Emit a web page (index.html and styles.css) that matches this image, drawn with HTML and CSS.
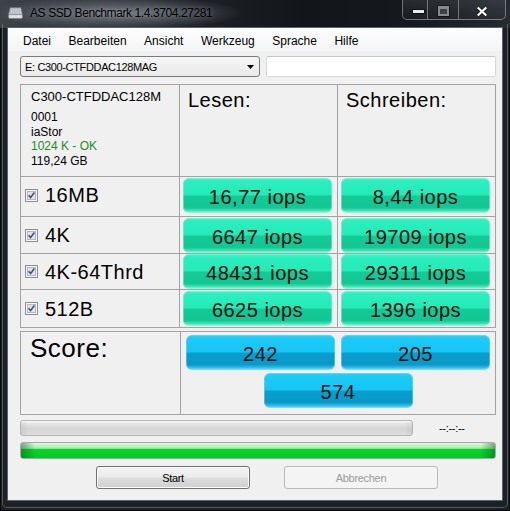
FILE: index.html
```html
<!DOCTYPE html>
<html lang="de">
<head>
<meta charset="utf-8">
<title>AS SSD Benchmark</title>
<link rel="stylesheet" href="styles.css">
</head>
<body>
<div class="window">
  <div class="titlebar">
    <svg class="app-icon" width="15" height="12" viewBox="0 0 15 12">
      <path d="M2.2 0.8 H12.8 L14.4 7.6 H0.6 Z" fill="#b4b9be" stroke="#80868c" stroke-width="0.6"/>
      <path d="M4 1.5 L3.2 7 M6 1.5 L5.6 7 M8 1.5 L8 7 M10 1.5 L10.4 7 M12 1.5 L12.8 7" stroke="#d7dadd" stroke-width="0.7"/>
      <rect x="0.6" y="7.6" width="13.8" height="3.8" rx="0.8" fill="#dfe2e5" stroke="#7b8086" stroke-width="0.6"/>
    </svg>
    <span class="title">AS SSD Benchmark 1.4.3704.27281</span>
    <div class="caption-buttons">
      <div class="cb cb-min"><span class="min-glyph"></span></div>
      <div class="cb cb-max"><span class="max-glyph"></span></div>
      <div class="cb cb-close">
        <svg width="10" height="9" viewBox="0 0 10 9">
          <path d="M1.5 1.2 L8.5 7.8 M8.5 1.2 L1.5 7.8" stroke="rgba(0,0,0,0.55)" stroke-width="3.6" stroke-linecap="square"/>
          <path d="M1.5 1.2 L8.5 7.8 M8.5 1.2 L1.5 7.8" stroke="#ffffff" stroke-width="2.2" stroke-linecap="square"/>
        </svg>
      </div>
    </div>
  </div>
  <div class="frame-body">
    <div class="client">
      <div class="menubar">
        <span class="menu-item">Datei</span>
        <span class="menu-item">Bearbeiten</span>
        <span class="menu-item">Ansicht</span>
        <span class="menu-item">Werkzeug</span>
        <span class="menu-item">Sprache</span>
        <span class="menu-item">Hilfe</span>
      </div>
      <div class="content">
        <div class="selector-row">
          <div class="combo">
            <span class="combo-text">E: C300-CTFDDAC128MAG</span>
            <svg class="combo-arrow" width="7" height="4" viewBox="0 0 7 4"><path d="M0 0 H7 L3.5 4 Z" fill="#000"/></svg>
          </div>
          <div class="textbox"></div>
        </div>

        <div class="results">
          <div class="cell info">
            <div class="model">C300-CTFDDAC128M</div>
            <div class="info-line">0001</div>
            <div class="info-line">iaStor</div>
            <div class="info-line ok">1024 K - OK</div>
            <div class="info-line">119,24 GB</div>
          </div>
          <div class="cell head">Lesen:</div>
          <div class="cell head">Schreiben:</div>

          <div class="cell label first"><svg class="check" width="13" height="13" viewBox="0 0 13 13"><rect x="0.5" y="0.5" width="12" height="12" fill="#f5f5f5" stroke="#8e8f8f"/><rect x="2.5" y="2.5" width="8" height="8" fill="#dfe3ea" stroke="#b3b8c2"/><path d="M3.6 6.3 L5.6 8.6 L9.4 3.6" fill="none" stroke="#3d4f93" stroke-width="1.6"/></svg><span>16MB</span></div>
          <div class="cell barcell first"><div class="bar green">16,77 iops</div></div>
          <div class="cell barcell first"><div class="bar green">8,44 iops</div></div>

          <div class="cell label"><svg class="check" width="13" height="13" viewBox="0 0 13 13"><rect x="0.5" y="0.5" width="12" height="12" fill="#f5f5f5" stroke="#8e8f8f"/><rect x="2.5" y="2.5" width="8" height="8" fill="#dfe3ea" stroke="#b3b8c2"/><path d="M3.6 6.3 L5.6 8.6 L9.4 3.6" fill="none" stroke="#3d4f93" stroke-width="1.6"/></svg><span>4K</span></div>
          <div class="cell barcell"><div class="bar green">6647 iops</div></div>
          <div class="cell barcell"><div class="bar green">19709 iops</div></div>

          <div class="cell label"><svg class="check" width="13" height="13" viewBox="0 0 13 13"><rect x="0.5" y="0.5" width="12" height="12" fill="#f5f5f5" stroke="#8e8f8f"/><rect x="2.5" y="2.5" width="8" height="8" fill="#dfe3ea" stroke="#b3b8c2"/><path d="M3.6 6.3 L5.6 8.6 L9.4 3.6" fill="none" stroke="#3d4f93" stroke-width="1.6"/></svg><span>4K-64Thrd</span></div>
          <div class="cell barcell"><div class="bar green">48431 iops</div></div>
          <div class="cell barcell"><div class="bar green">29311 iops</div></div>

          <div class="cell label"><svg class="check" width="13" height="13" viewBox="0 0 13 13"><rect x="0.5" y="0.5" width="12" height="12" fill="#f5f5f5" stroke="#8e8f8f"/><rect x="2.5" y="2.5" width="8" height="8" fill="#dfe3ea" stroke="#b3b8c2"/><path d="M3.6 6.3 L5.6 8.6 L9.4 3.6" fill="none" stroke="#3d4f93" stroke-width="1.6"/></svg><span>512B</span></div>
          <div class="cell barcell"><div class="bar green">6625 iops</div></div>
          <div class="cell barcell"><div class="bar green">1396 iops</div></div>
        </div>

        <div class="score">
          <div class="cell score-label">Score:</div>
          <div class="cell score-bars">
            <div class="bar blue">242</div>
            <div class="bar blue">205</div>
            <div class="bar blue">574</div>
          </div>
        </div>

        <div class="progress-row">
          <div class="progress"></div>
          <span class="time">--:--:--</span>
        </div>

        <div class="green-progress"></div>

        <div class="buttons">
          <button class="btn">Start</button>
          <button class="btn disabled">Abbrechen</button>
        </div>
      </div>
    </div>
  </div>
</div>
</body>
</html>
```
FILE: styles.css
```css
* { box-sizing: border-box; }

html, body {
  margin: 0;
  padding: 0;
  background: #000;
}

body {
  width: 510px;
  height: 511px;
  overflow: hidden;
  font-family: "Liberation Sans", Arial, sans-serif;
}

.window {
  position: relative;
  width: 510px;
  height: 511px;
  background: #1d2126;
  box-shadow: inset 0 0 0 1px #07090b;
  display: flex;
  flex-direction: column;
}

.window::after {
  content: "";
  position: absolute;
  left: 2px;
  right: 2px;
  top: 24px;
  bottom: 3px;
  border: 1px solid rgba(130, 137, 145, 0.55);
  border-top: none;
  border-radius: 0 0 5px 5px;
  pointer-events: none;
}

/* ---------- title bar ---------- */
.titlebar {
  height: 28px;
  flex: none;
  display: flex;
  align-items: flex-start;
  padding-left: 8px;
  background:
    radial-gradient(ellipse 125px 17px at 118px 13px, rgba(120, 126, 133, 0.95), rgba(120, 126, 133, 0) 100%),
    linear-gradient(to right, #3e434a 0%, #22262c 30%, #121519 60%, #15191e 80%, #262b31 100%);
}

.app-icon {
  flex: none;
  margin-top: 7px;
}

.title {
  margin-left: 7px;
  margin-top: 6px;
  font-size: 12px;
  line-height: 15px;
  letter-spacing: -0.4px;
  color: #000;
  text-shadow: 0 0 5px rgba(255, 255, 255, 0.35);
  white-space: nowrap;
}

.caption-buttons {
  margin-left: auto;
  margin-right: 4px;
  width: 104px;
  height: 20px;
  display: flex;
  border: 1px solid rgba(190, 196, 202, 0.5);
  border-top: none;
  border-radius: 0 0 5px 5px;
  background: linear-gradient(rgba(255, 255, 255, 0.08), rgba(255, 255, 255, 0.02));
  overflow: hidden;
}

.cb {
  height: 19px;
  display: flex;
  align-items: center;
  justify-content: center;
  padding-top: 3px;
}

.cb-min {
  width: 24px;
  justify-content: flex-end;
  padding-right: 3px;
}

.cb-max {
  width: 31px;
  border-left: 1px solid rgba(190, 196, 202, 0.5);
}

.cb-close {
  width: 47px;
  border-left: 1px solid rgba(190, 196, 202, 0.5);
}

.min-glyph {
  width: 11px;
  height: 3px;
  background: #ececec;
  box-shadow: 0 0 0 1px rgba(0, 0, 0, 0.5);
}

.max-glyph {
  width: 11px;
  height: 10px;
  border: 2px solid #858b91;
  border-top-width: 3px;
  background: #3c4147;
  box-shadow: 0 0 0 1px rgba(0, 0, 0, 0.4);
}

/* ---------- client ---------- */
.frame-body {
  flex: 1;
  padding: 0 8px 11px 8px;
}

.client {
  width: 494px;
  height: 472px;
  background: #f0f0f0;
  box-shadow: 0 0 0 1px #59616a;
  display: flex;
  flex-direction: column;
}

.menubar {
  height: 23px;
  flex: none;
  display: flex;
  align-items: center;
  gap: 17.5px;
  padding: 2px 0 0 15px;
  background: linear-gradient(#fdfdfe, #f3f4f6);
  font-size: 12px;
  color: #000;
}

.content {
  padding: 5px 6px 0 12px;
}

.selector-row {
  display: flex;
  gap: 6px;
  height: 21px;
}

.combo {
  width: 240px;
  height: 21px;
  border: 1px solid #7a7a7a;
  border-radius: 3px;
  background: linear-gradient(#f6f6f6, #e9e9e9);
  display: flex;
  align-items: center;
  padding: 0 5px 0 4px;
  font-size: 11px;
  letter-spacing: -0.35px;
  color: #000;
}

.combo-text {
  flex: 1;
  white-space: nowrap;
}

.textbox {
  width: 230px;
  height: 21px;
  background: #fff;
  border: 1px solid #d5d8dc;
  border-top-color: #c4c7cc;
  border-radius: 2px;
}

/* ---------- results table ---------- */
.results {
  margin-top: 7px;
  width: 476px;
  display: grid;
  grid-template-columns: 158px 157px 157px;
  grid-template-rows: 91px 39px 36px 35px 37px;
  gap: 1px;
  padding: 1px;
  background: #a3a3a3;
}

.cell {
  background: #f0f0f0;
}

.info {
  padding: 4px 0 0 10px;
  color: #000;
}

.model {
  font-size: 13px;
  line-height: 16px;
  margin-bottom: 5px;
}

.info-line {
  font-size: 12px;
  line-height: 14.6px;
}

.info-line.ok {
  color: #1f8a1f;
}

.head {
  padding: 3px 0 0 8px;
  font-size: 20px;
  line-height: 24px;
  letter-spacing: 0.5px;
  color: #000;
}

.label {
  display: flex;
  align-items: center;
  padding-left: 4px;
  font-size: 20px;
  line-height: 1;
  letter-spacing: 0.5px;
  color: #000;
}

.label .check {
  flex: none;
  margin-right: 7px;
}

.barcell {
  display: flex;
  align-items: center;
  padding-left: 3px;
}

.first {
  padding-bottom: 3px;
}

.bar {
  width: 149px;
  height: 35px;
  flex: none;
  border-radius: 6px;
  display: flex;
  align-items: center;
  justify-content: center;
  padding: 3px 0 0 0;
  font-size: 20px;
  line-height: 1;
  letter-spacing: 0.5px;
  color: #0d0d0d;
}

.bar.green {
  background: linear-gradient(#3df5c9 0%, #2cefbf 10%, #25e9b7 49%, #14ca97 51%, #12c794 84%, #3bdfad 92%, #97f8dc 100%);
  box-shadow: inset 0 0 0 1px rgba(150, 255, 225, 0.45);
}

.bar.blue {
  background: linear-gradient(#2ad3fb 0%, #1bcaf7 10%, #17c5f4 49%, #0a9ecd 51%, #0999c8 84%, #2bb6e5 92%, #7ddcff 100%);
  box-shadow: inset 0 0 0 1px rgba(140, 225, 255, 0.45);
  padding-top: 2px;
}

/* ---------- score table ---------- */
.score {
  margin-top: 3px;
  width: 476px;
  display: grid;
  grid-template-columns: 159px 314px;
  grid-template-rows: 82px;
  gap: 1px;
  padding: 1px;
  background: #a3a3a3;
}

.score-label {
  padding: 1px 0 0 9px;
  font-size: 26px;
  line-height: 30px;
  letter-spacing: 0.5px;
  color: #000;
}

.score-bars {
  display: flex;
  flex-wrap: wrap;
  justify-content: center;
  align-content: flex-start;
  gap: 3px 6px;
  padding-top: 3px;
}

/* ---------- progress ---------- */
.progress-row {
  margin-top: 5px;
  display: flex;
  align-items: center;
  height: 16px;
}

.progress {
  width: 393px;
  height: 16px;
  border: 1px solid #b4b4b4;
  border-radius: 3px;
  background:
    linear-gradient(to right, rgba(0, 0, 0, 0.06), rgba(0, 0, 0, 0) 2%, rgba(0, 0, 0, 0) 98%, rgba(0, 0, 0, 0.06)),
    linear-gradient(#f0f0f0 0%, #e3e3e3 25%, #d7d7d7 55%, #d9d9d9 85%, #e2e2e2 100%);
  box-shadow: inset 0 1px 0 #f8f8f8;
}

.time {
  margin-left: 26px;
  font-size: 11px;
  letter-spacing: -0.3px;
  color: #000;
}

.green-progress {
  margin-top: 6px;
  width: 476px;
  height: 17px;
  border: 1px solid #a9aba9;
  border-radius: 3px;
  background:
    linear-gradient(to right, rgba(0, 80, 20, 0.45), rgba(0, 80, 20, 0) 3%, rgba(0, 80, 20, 0) 97%, rgba(0, 80, 20, 0.45)),
    linear-gradient(#e2f8e2 0%, #bff2bf 20%, #a4eaa6 36%, #08d52b 40%, #02d025 75%, #03c424 100%);
}

/* ---------- buttons ---------- */
.buttons {
  margin-top: 7px;
  display: flex;
  gap: 34px;
  padding-left: 76px;
}

.btn {
  width: 154px;
  height: 23px;
  padding: 0;
  border: 1px solid #707070;
  border-radius: 3px;
  background: linear-gradient(#f3f3f3 0%, #ebebeb 48%, #dddddd 52%, #cfcfcf 100%);
  box-shadow: inset 0 0 0 1px #fbfbfb;
  font-family: "Liberation Sans", Arial, sans-serif;
  font-size: 11px;
  letter-spacing: -0.3px;
  color: #000;
}

.btn.disabled {
  border-color: #b9b9b9;
  background: #f4f4f4;
  box-shadow: none;
  color: #9c9c9c;
}
```
